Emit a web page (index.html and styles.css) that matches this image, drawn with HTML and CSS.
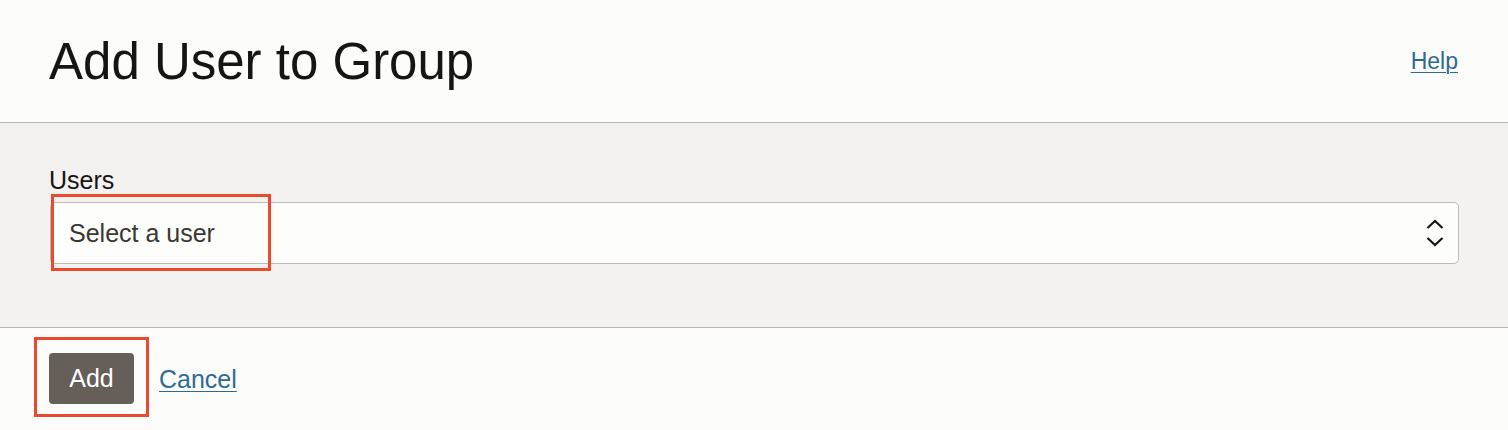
FILE: index.html
```html
<!DOCTYPE html>
<html lang="en">
<head>
<meta charset="utf-8">
<title>Add User to Group</title>
<link rel="stylesheet" href="styles.css">
</head>
<body>
<div class="panel">
  <header class="header">
    <h1 class="title">Add User to Group</h1>
    <a class="link help" href="#">Help</a>
  </header>
  <section class="body">
    <label class="label" for="users">Users</label>
    <div class="select">
      <span class="placeholder">Select a user</span>
      <svg class="chev" width="20" height="28" viewBox="0 0 20 28" aria-hidden="true">
        <path d="M2.5 9 L10 2 L17.5 9" fill="none" stroke="#161513" stroke-width="2.2"/>
        <path d="M2.5 19 L10 26 L17.5 19" fill="none" stroke="#161513" stroke-width="2.2"/>
      </svg>
      <span class="mark mark-select"></span>
    </div>
  </section>
  <footer class="footer">
    <div class="btn-wrap">
      <button class="btn">Add</button>
      <span class="mark mark-btn"></span>
    </div>
    <a class="link cancel" href="#">Cancel</a>
  </footer>
</div>
</body>
</html>
```

FILE: styles.css
```css
html, body {
  margin: 0;
  padding: 0;
  background: #fcfcfb;
}
body {
  font-family: "Liberation Sans", Arial, Helvetica, sans-serif;
  color: #161513;
  width: 1508px;
  height: 430px;
  overflow: hidden;
}
.panel {
  display: flex;
  flex-direction: column;
}
.header {
  height: 123px;
  box-sizing: border-box;
  border-bottom: 1px solid #b9b6b3;
  display: flex;
  align-items: flex-start;
  justify-content: space-between;
  padding: 0 50px 0 49px;
}
.title {
  margin: 0;
  margin-top: 32px;
  font-size: 51px;
  font-weight: 400;
  line-height: 60px;
  letter-spacing: 0;
}
.link {
  color: #2e6b93;
  text-decoration: underline;
  text-underline-offset: 3px;
  text-decoration-thickness: 1px;
}
.help {
  margin-top: 47px;
  font-size: 23px;
  line-height: 28px;
}
.body {
  height: 205px;
  box-sizing: border-box;
  background: #f3f2f1;
  border-bottom: 1px solid #b9b6b3;
  padding: 42px 49px 0 50px;
  display: flex;
  flex-direction: column;
}
.label {
  display: block;
  font-size: 25px;
  line-height: 30px;
  color: #161513;
  margin-left: -1px;
  margin-bottom: 7px;
}
.select {
  position: relative;
  height: 62px;
  box-sizing: border-box;
  border: 1px solid #bdb9b5;
  border-radius: 5px;
  background: #fdfdfc;
  display: flex;
  align-items: center;
  justify-content: space-between;
  padding: 0 13px 0 18px;
}
.placeholder {
  font-size: 25px;
  color: #3b3733;
  line-height: 30px;
}
.chev {
  display: block;
}
.mark {
  position: absolute;
  border: 3px solid #ea4a2e;
  box-sizing: border-box;
  pointer-events: none;
}
.mark-select {
  left: 0;
  top: -9px;
  width: 220px;
  height: 77px;
}
.footer {
  height: 102px;
  display: flex;
  align-items: flex-start;
  padding-left: 49px;
  gap: 25px;
}
.btn-wrap {
  position: relative;
  margin-top: 25px;
}
.btn {
  display: block;
  width: 85px;
  height: 51px;
  border: none;
  border-radius: 4px;
  background: #655e59;
  color: #ffffff;
  font-family: "Liberation Sans", Arial, sans-serif;
  font-size: 25px;
  padding: 0;
}
.mark-btn {
  left: -15px;
  top: -16px;
  width: 115px;
  height: 80px;
}
.cancel {
  margin-top: 36px;
  font-size: 25px;
  line-height: 30px;
}
```
